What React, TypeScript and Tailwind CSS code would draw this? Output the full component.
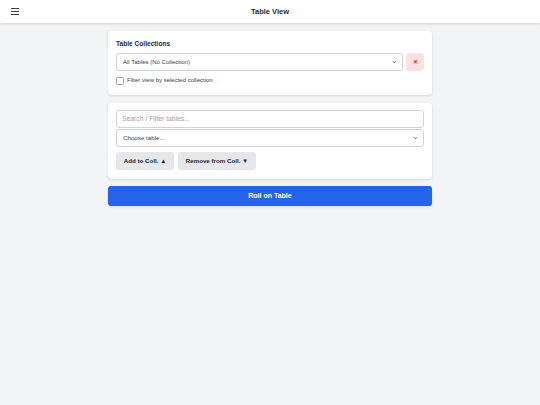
import React from 'react';

const font = { fontFamily: '"Liberation Sans", Arial, sans-serif' };

function Chevron() {
  return (
    <svg width="5" height="5" viewBox="0 0 10 10" className="absolute right-[5px] top-1/2 -translate-y-1/2 text-[#4b5563]">
      <path d="M2 3.5 L5 6.5 L8 3.5" fill="none" stroke="currentColor" strokeWidth="1.8" />
    </svg>
  );
}

export default function App() {
  return (
    <div className="min-h-[405px] bg-[#f3f4f6] text-[#1f2937]" style={font}>
      <header className="relative h-[23px] bg-white shadow-sm flex items-center">
        <div className="ml-[11px] flex flex-col gap-[2px] w-[8px]">
          <span className="block h-[1.2px] bg-[#374151]" />
          <span className="block h-[1.2px] bg-[#374151]" />
          <span className="block h-[1.2px] bg-[#374151]" />
        </div>
        <h1 className="absolute left-1/2 -translate-x-1/2 text-[7.5px] font-bold text-[#1f2937]">Table View</h1>
      </header>

      <main className="w-[324px] mx-auto pt-[8px] flex flex-col gap-[8px]">
        <section className="bg-white rounded-[4px] shadow-sm px-[8px] pt-[8px] pb-[10px]">
          <h2 className="text-[6.6px] font-bold leading-[9px] mb-[5px]">Table Collections</h2>
          <div className="flex gap-[3px]">
            <div className="relative flex-1 h-[18px] border border-[#d1d5db] rounded-[3px] flex items-center px-[6px] text-[6px] text-[#374151]">
              All Tables (No Collection)
              <Chevron />
            </div>
            <button className="w-[18px] h-[18px] rounded-[3px] bg-[#fee2e2] flex items-center justify-center text-[#dc2626] text-[6px] font-bold">
              ✕
            </button>
          </div>
          <label className="mt-[5px] h-[9px] flex items-center gap-[3px] text-[6px] text-[#374151]">
            <span className="w-[8px] h-[8px] border border-[#9ca3af] rounded-[1.5px] bg-white" />
            Filter view by selected collection
          </label>
        </section>

        <section className="bg-white rounded-[4px] shadow-sm px-[8px] pt-[7px] pb-[9px]">
          <div className="h-[18px] border border-[#d1d5db] rounded-[3px] flex items-center px-[5px] text-[6.8px] text-[#9ca3af]">
            Search / Filter tables...
          </div>
          <div className="relative mt-[1px] h-[18px] border border-[#d1d5db] rounded-[3px] flex items-center px-[6px] text-[6.2px] text-[#374151]">
            Choose table...
            <Chevron />
          </div>
          <div className="mt-[5px] flex gap-[4px]">
            <button className="h-[18px] w-[58px] rounded-[3px] bg-[#e5e7eb] text-[6.2px] font-bold flex items-center justify-center">
              Add to Coll. ▲
            </button>
            <button className="h-[18px] w-[78px] rounded-[3px] bg-[#e5e7eb] text-[6.2px] font-bold flex items-center justify-center">
              Remove from Coll. ▼
            </button>
          </div>
        </section>

        <button className="-mt-[1px] h-[20px] rounded-[3px] bg-[#2563eb] text-white text-[7px] font-bold shadow-sm">
          Roll on Table
        </button>
      </main>
    </div>
  );
}
